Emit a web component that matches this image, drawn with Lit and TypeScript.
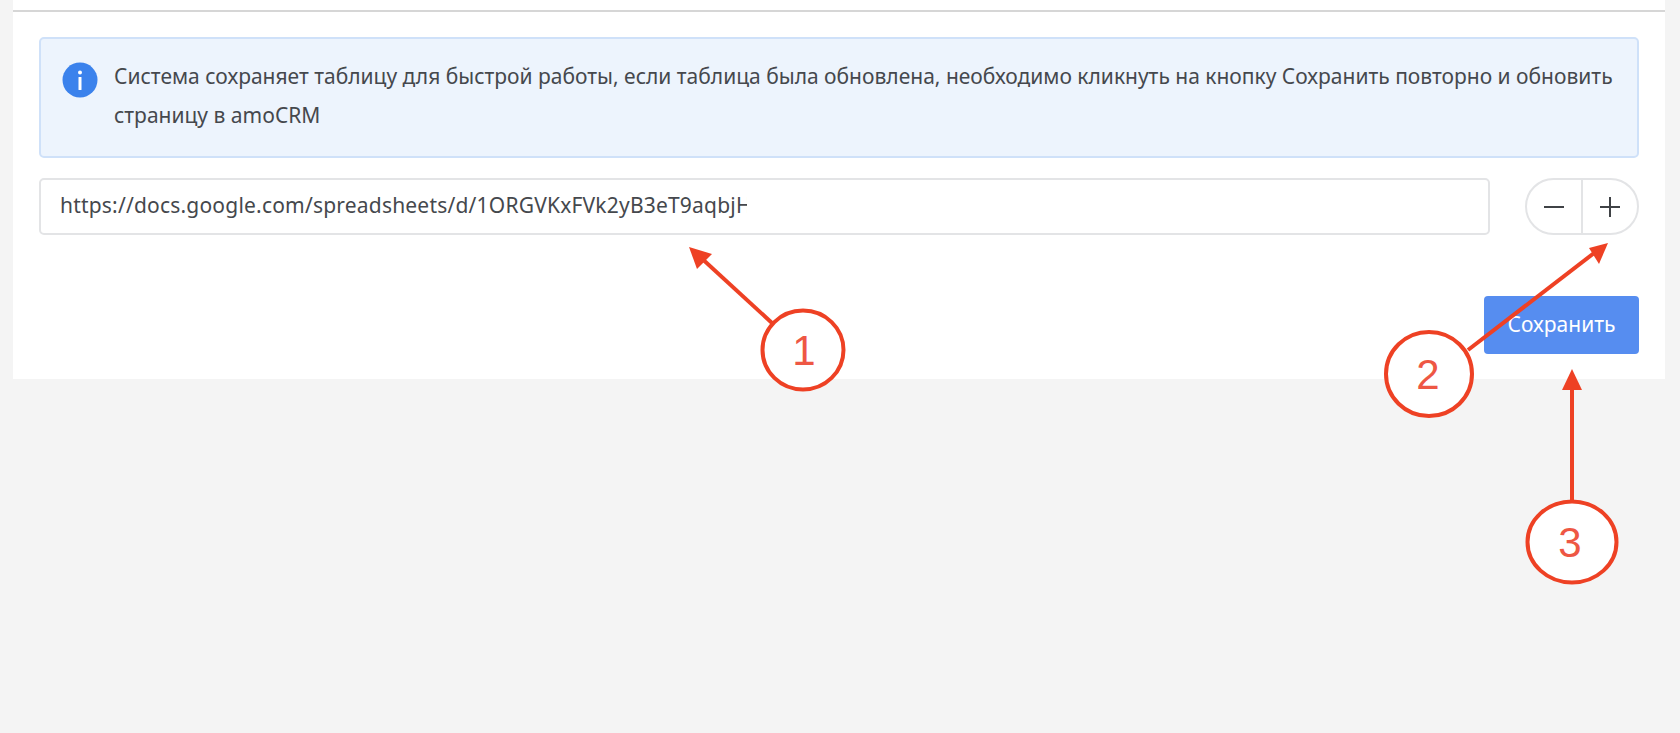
import { LitElement, html, css, svg } from "lit";
import { customElement } from "lit/decorators.js";

@customElement("app-root")
export class AppRoot extends LitElement {
  static styles = css`
    :host {
      display: block;
      position: relative;
      height: 733px;
      overflow: hidden;
      background: #f4f4f4;
      font-family: "Noto Sans", "Open Sans", sans-serif;
      color: #45484d;
    }
    .panel {
      margin: 0 15px 0 13px;
      height: 379px;
      box-sizing: border-box;
      background: #fff;
      padding: 10px 0 0;
    }
    .rule {
      height: 2px;
      background: #d6d6d6;
    }
    .body {
      padding: 25px 26px 0 26px;
    }
    .alert {
      box-sizing: border-box;
      height: 121px;
      background: #edf4fd;
      border: 2px solid #cfe1f9;
      border-radius: 5px;
      padding: 18px 20px 0 21px;
      display: flex;
      gap: 16px;
      align-items: flex-start;
    }
    .info {
      flex: none;
      width: 36px;
      height: 36px;
      margin-top: 5px;
      display: block;
    }
    .alert-text {
      font-size: 21px;
      line-height: 39px;
      margin: 0;
      white-space: nowrap;
    }
    .row {
      display: flex;
      justify-content: space-between;
      margin-top: 20px;
    }
    .input {
      box-sizing: border-box;
      width: 1451px;
      height: 57px;
      border: 2px solid #e3e4e6;
      border-radius: 5px;
      padding: 0 19px 4px;
      display: flex;
      align-items: center;
      font-size: 21px;
      letter-spacing: 0.2px;
    }
    .value {
      display: block;
      width: 687px;
      overflow: hidden;
      white-space: nowrap;
    }
    .stepper {
      box-sizing: border-box;
      width: 114px;
      height: 57px;
      border: 2px solid #e3e4e6;
      border-radius: 29px;
      display: flex;
    }
    .step {
      flex: 1;
      display: flex;
      align-items: center;
      justify-content: center;
    }
    .step + .step {
      border-left: 2px solid #e3e4e6;
    }
    .step svg {
      width: 20px;
      height: 20px;
      display: block;
    }
    .actions {
      display: flex;
      justify-content: flex-end;
      margin-top: 61px;
    }
    .save {
      box-sizing: border-box;
      width: 155px;
      height: 58px;
      background: #568df0;
      border-radius: 4px;
      color: #fff;
      display: flex;
      align-items: center;
      justify-content: center;
      font-size: 21px;
      padding-bottom: 2px;
    }
    .marks {
      position: absolute;
      left: 0;
      top: 0;
      width: 1680px;
      height: 733px;
      pointer-events: none;
    }
    .digit {
      font-family: "Liberation Sans", sans-serif;
      font-size: 42px;
      fill: #ee5744;
      text-anchor: middle;
    }
  `;

  private marks() {
    const red = "#ee4124";
    return svg`
      <line x1="772" y1="323" x2="698" y2="255" stroke=${red} stroke-width="4"/>
      <polygon points="689,247 712,254 697,269" fill=${red}/>
      <ellipse cx="803" cy="350" rx="40.5" ry="39.5" fill="#fff" stroke=${red} stroke-width="4"/>
      <text class="digit" x="804" y="365">1</text>

      <line x1="1468" y1="350" x2="1598" y2="250" stroke=${red} stroke-width="4"/>
      <polygon points="1608,243 1599,264 1589,248" fill=${red}/>
      <ellipse cx="1429" cy="374" rx="43" ry="42" fill="#fff" stroke=${red} stroke-width="4"/>
      <text class="digit" x="1428" y="389">2</text>

      <line x1="1572" y1="502" x2="1572" y2="385" stroke=${red} stroke-width="4"/>
      <polygon points="1572,369 1582,390 1562,390" fill=${red}/>
      <ellipse cx="1572" cy="542" rx="44.5" ry="40.5" fill="#fff" stroke=${red} stroke-width="4"/>
      <text class="digit" x="1570" y="557">3</text>
    `;
  }

  render() {
    return html`
      <div class="panel">
        <div class="rule"></div>
        <div class="body">
          <div class="alert">
            <svg class="info" viewBox="0 0 36 36" aria-hidden="true">
              <circle cx="18" cy="18" r="17.5" fill="#3b82ec"/>
              <circle cx="18" cy="10.5" r="2" fill="#fff"/>
              <rect x="16.5" y="15" width="3" height="13" rx="0.5" fill="#fff"/>
            </svg>
            <p class="alert-text">Система сохраняет таблицу для быстрой работы, если таблица была обновлена, необходимо кликнуть на кнопку Сохранить повторно и обновить<br />страницу в amoCRM</p>
          </div>
          <div class="row">
            <div class="input"><span class="value">https://docs.google.com/spreadsheets/d/1ORGVKxFVk2yB3eT9aqbjHx2Lm</span></div>
            <div class="stepper">
              <div class="step">
                <svg viewBox="0 0 20 20"><path d="M0 10h20" stroke="#3f4246" stroke-width="2"/></svg>
              </div>
              <div class="step">
                <svg viewBox="0 0 20 20"><path d="M0 10h20M10 0v20" stroke="#3f4246" stroke-width="2"/></svg>
              </div>
            </div>
          </div>
          <div class="actions"><div class="save">Сохранить</div></div>
        </div>
      </div>
      <svg class="marks" viewBox="0 0 1680 733" aria-hidden="true">${this.marks()}</svg>
    `;
  }
}
